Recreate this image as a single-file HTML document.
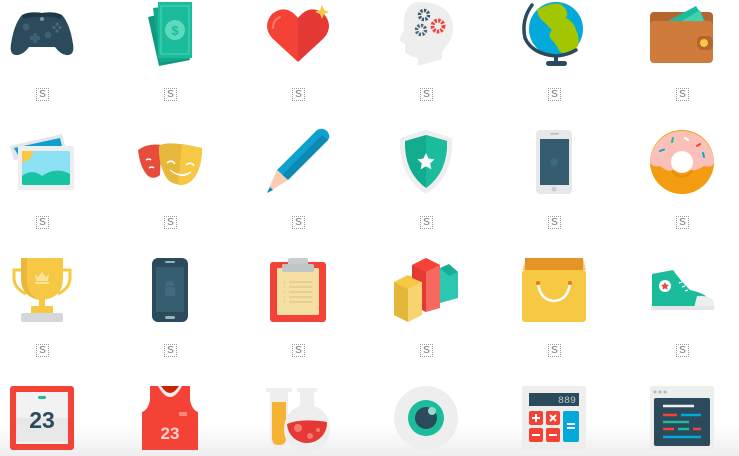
<!DOCTYPE html>
<html><head><meta charset="utf-8"><style>
html,body{margin:0;padding:0;background:#fff;width:739px;height:456px;overflow:hidden;position:relative}
.s{position:absolute;width:11px;height:11px;border:1px dotted #999;font:10px/11px "Liberation Sans",sans-serif;color:#777;text-align:center}
svg{position:absolute;left:0;top:0}
</style></head><body>
<svg width="739" height="456" viewBox="0 0 739 456" font-family="Liberation Sans, sans-serif">
<defs><linearGradient id="bg" x1="0" y1="0" x2="0" y2="1"><stop offset="0" stop-color="#fff"/><stop offset="1" stop-color="#eeeeee"/></linearGradient></defs>
<rect x="0" y="425" width="739" height="31" fill="url(#bg)"/>
<!-- gamepad -->
<path d="M22 15 Q30 11 42 13 Q54 11 62 15 Q70 24 73 44 Q75 56 66 55 Q60 54 55 47 L29 47 Q24 54 18 55 Q9 56 11 44 Q14 24 22 15Z" fill="#2b4a5c"/>
<path d="M22 15 Q30 11 42 13 Q54 11 62 15 L60 19 Q50 16 42 17 Q34 16 24 19Z" fill="#1f3848"/>
<circle cx="42" cy="19" r="2" fill="#7f96a3"/><circle cx="26" cy="27" r="3.5" fill="#3f6072"/><circle cx="48" cy="35" r="3.5" fill="#3f6072"/>
<path d="M33 33h4v3h3v4h-3v3h-4v-3h-3v-4h3z" fill="#3f6072"/>
<circle cx="57" cy="24" r="1.6" fill="#46697b"/><circle cx="57" cy="31" r="1.6" fill="#46697b"/><circle cx="54" cy="27.5" r="1.6" fill="#46697b"/><circle cx="60" cy="27.5" r="1.6" fill="#46697b"/>
<!-- money -->
<path d="M148 17 L178 10 L190 60 L159 66Z" fill="#0f9a7e"/>
<path d="M153 8 L184 4 L191 58 L160 63Z" fill="#13a88a"/>
<rect x="158" y="2" width="34" height="56" fill="#1abc9c"/>
<rect x="161" y="6" width="28" height="48" fill="none" stroke="#5ed9be" stroke-width="0.8"/>
<circle cx="175" cy="30" r="10" fill="#5ed9be"/><text x="175" y="35" font-size="13" fill="#1abc9c" text-anchor="middle" font-weight="bold">$</text>
<!-- heart -->
<path d="M298 62 L272 38 Q262 26 272 14 Q286 3 298 18Z" fill="#f44336"/>
<path d="M298 62 L324 38 Q334 26 324 14 Q310 3 298 18Z" fill="#e53935"/>
<path d="M273 28 Q273 20 280 17" stroke="#f77a70" stroke-width="2" fill="none" stroke-linecap="round"/>
<path d="M322 5 L324 10 L329 12 L324 14 L322 19 L320 14 L315 12 L320 10Z" fill="#f6c843"/>
<!-- head -->
<path d="M418 2 Q452 2 453 28 Q453 38 447 45 L442 52 L442 59 L418 66 L418 58 Q408 56 405 52 L405 44 L399 40 L404 30 Q402 4 418 2Z" fill="#eeeeee"/>
<circle cx="424" cy="15" r="4.5" fill="none" stroke="#3e5a6b" stroke-width="3.5" stroke-dasharray="2.2 1.3"/>
<circle cx="421" cy="30" r="4.5" fill="none" stroke="#4d6a7b" stroke-width="3.5" stroke-dasharray="2.2 1.3"/>
<circle cx="438" cy="26" r="5.5" fill="none" stroke="#f44336" stroke-width="4" stroke-dasharray="2.4 1.3"/>
<!-- globe -->
<circle cx="556" cy="29" r="27" fill="#03a9d9"/>
<path d="M537 10 Q550 2 560 4 Q570 10 566 18 Q574 22 576 30 Q580 38 578 46 Q570 56 560 52 Q556 44 552 40 Q547 36 552 30 Q548 26 544 22 Q538 18 537 10Z" fill="#a2c700"/>
<path d="M532 5 Q521 20 525 38 Q532 54 556 56 Q568 55 576 50" fill="none" stroke="#2b4a5c" stroke-width="3.5" stroke-linecap="round"/>
<rect x="554" y="55" width="4" height="8" fill="#2b4a5c"/><rect x="546" y="61" width="21" height="5" rx="2.5" fill="#2b4a5c"/>
<!-- wallet -->
<rect x="650" y="12" width="63" height="50" rx="4" fill="#b5652e"/>
<path d="M666 22 L696 6 L706 22Z" fill="#1abc9c"/><path d="M680 22 L700 10 L704 22Z" fill="#3fd1b1"/>
<rect x="650" y="21" width="63" height="42" rx="4" fill="#cf7b3c"/>
<rect x="697" y="36" width="16" height="14" rx="5" fill="#b5652e"/><circle cx="704" cy="43" r="4" fill="#f6c843"/>
<!-- photos -->
<path d="M10 146 L62 134 L66 150 L14 160Z" fill="#e3e6e8"/><path d="M14 148 L60 138 L62 146 L18 155Z" fill="#0ea0cf"/>
<rect x="18" y="146" width="56" height="44" rx="2" fill="#eeeeee"/>
<rect x="22" y="151" width="48" height="34" rx="2" fill="#8de1f5"/>
<path d="M22 151 h11 a11 11 0 0 1 -11 11Z" fill="#f6c843"/>
<path d="M22 176 Q32 168 42 176 Q56 166 70 174 L70 183 Q70 185 68 185 L24 185 Q22 185 22 183Z" fill="#1bc3a5"/>
<!-- masks -->
<path d="M138 150 Q148 143 161 145 L160 175 Q154 180 148 176 Q140 168 138 150Z" fill="#e74c3c"/>
<path d="M146 160 q3 -2 5 0 M149 168 q3 -2 5 0" stroke="#fff" stroke-width="1.4" fill="none"/>
<path d="M159 146 Q166 140 202 148 Q202 172 190 182 Q178 188 168 180 Q158 166 159 146Z" fill="#e6b93c"/>
<path d="M182 144 L202 148 Q202 172 190 182 Q184 186 178 185Z" fill="#f6c843"/>
<path d="M167 163 q5 -4 8 1 M186 165 q5 -4 8 1" stroke="#fff" stroke-width="1.6" fill="none"/>
<path d="M170 170 Q180 178 191 172 Q182 180 170 170Z" fill="#fff" stroke="#fff" stroke-width="1"/>
<!-- pencil -->
<path d="M277 170 L317 130 Q322 127 327 131 Q331 136 328 140 L288 180Z" fill="#0ea0cf"/>
<path d="M282 175 L322 135 L328 140 L288 180Z" fill="#0a8ab3"/>
<path d="M277 170 L288 180 L267 193Z" fill="#f9cdb4"/><path d="M267 193 L270 187 L273 190Z" fill="#0a8ab3"/>
<!-- shield -->
<path d="M426 130 L452 138 Q454 176 426 194 Q398 176 400 138Z" fill="#eeeeee"/>
<path d="M426 135 L447 141 Q448 172 426 188 Q404 172 405 141Z" fill="#12ab8e"/>
<path d="M426 135 L447 141 Q448 172 426 188Z" fill="#1abc9c"/>
<path d="M426 153 l2.6 5.5 6 .7 -4.4 4.2 1.2 6 -5.4 -3 -5.4 3 1.2 -6 -4.4 -4.2 6 -.7z" fill="#fafafa"/>
<!-- iphone -->
<rect x="536" y="130" width="36" height="64" rx="4" fill="#e6e8e9"/>
<rect x="540" y="139" width="29" height="46" fill="#345c6e"/>
<rect x="550" y="133" width="9" height="1.5" rx="1" fill="#b5bbbe"/><circle cx="554" cy="189" r="2.5" fill="#c9cecf"/>
<circle cx="554" cy="162" r="4" fill="#3e687b"/>
<!-- donut -->
<circle cx="682" cy="162" r="32" fill="#f39c12"/>
<path d="M650 163 A32 32 0 0 1 714 163 Q712 168 704 166 Q696 172 686 170 L676 170 Q668 173 660 166 Q654 168 650 163Z" fill="#fbc0b8"/>
<circle cx="682" cy="162" r="11" fill="#fff"/>
<path d="M672 170 A11 11 0 0 0 692 170" stroke="#e58e0c" stroke-width="2" fill="none"/>
<g stroke-width="2" stroke-linecap="round"><path d="M660 151 l4 -1.5" stroke="#03a9d9"/><path d="M672 142 l1 -4" stroke="#1abc9c"/><path d="M685 138 l3 2" stroke="#fff"/><path d="M697 146 l3 -2" stroke="#f44336"/><path d="M703 153 l1 4" stroke="#03a9d9"/></g>
<!-- trophy -->
<path d="M22 270 h-8 v8 q0 10 12 16 M62 270 h8 v8 q0 10 -12 16" stroke="#f6c843" stroke-width="3" fill="none"/>
<path d="M21 258 h42 v20 q0 20 -21 22 q-21 -2 -21 -22Z" fill="#f6c843"/>
<path d="M21 258 h6 v22 q0 14 12 20 q-18 -4 -18 -22Z" fill="#eab73a"/>
<rect x="39" y="298" width="6" height="10" fill="#f6c843"/><rect x="31" y="306" width="22" height="8" rx="1" fill="#f6c843"/>
<rect x="21" y="313" width="42" height="9" rx="2" fill="#d4d8da"/>
<path d="M35 274 l3 3 4 -5 4 5 3 -3 -1 7 h-12Z" fill="#fbe29a"/><rect x="35" y="282" width="14" height="2" fill="#fbe29a"/>
<!-- android phone -->
<rect x="152" y="258" width="36" height="64" rx="6" fill="#2b4a5c"/>
<rect x="156" y="267" width="28" height="45" fill="#355f71"/>
<rect x="165" y="261" width="10" height="2" rx="1" fill="#9eb0b9"/><rect x="165" y="316" width="10" height="3" rx="1.5" fill="#9eb0b9"/>
<rect x="165" y="287" width="10" height="9" rx="1" fill="#3e6b7e"/><path d="M165 286 a5 5 0 0 1 10 0Z" fill="#3e6b7e"/>
<!-- clipboard -->
<rect x="270" y="262" width="56" height="60" rx="3" fill="#f44336"/>
<rect x="277" y="268" width="42" height="47" rx="1" fill="#f5dfa3"/>
<rect x="288" y="258" width="20" height="8" rx="2" fill="#c9cdd0"/><rect x="282" y="264" width="32" height="8" rx="2" fill="#c0c5c8"/>
<g stroke="#dfc486" stroke-width="1.2"><path d="M289 282h23M289 287h23M289 292h23M289 297h23M289 302h23"/><path d="M284 282h1M284 287h1M284 292h1M284 297h1M284 302h1"/></g>
<!-- bar chart -->
<path d="M394 282 L408 275 L422 282 L422 315 L408 322 L394 315Z" fill="#f6d570"/><path d="M394 282 L408 289 L408 322 L394 315Z" fill="#e2b73a"/><path d="M394 282 L408 275 L422 282 L408 289Z" fill="#f6c843"/>
<path d="M412 265 L426 258 L440 265 L440 308 L426 312 L422 310 L422 282 L412 278Z" fill="#f7695e"/><path d="M412 265 L426 272 L426 312 L422 310 L422 282 L412 278Z" fill="#e53935"/><path d="M412 265 L426 258 L440 265 L426 272Z" fill="#f44336"/>
<path d="M440 268 L449 268 L458 272 L458 298 L440 303Z" fill="#2bc7b0"/><path d="M440 268 L449 264 L458 272 L449 276Z" fill="#1aae96"/>
<!-- bag -->
<rect x="525" y="258" width="58" height="14" fill="#e07a20"/>
<path d="M522 270 L527 258 L583 258 L586 270Z" fill="#e6a62c" opacity=".6"/>
<rect x="522" y="270" width="64" height="52" rx="3" fill="#f6c843"/>
<path d="M538 283 Q540 300 554 301 Q568 300 570 283" stroke="#fff" stroke-width="2.5" fill="none"/>
<circle cx="538" cy="283" r="2" fill="#e07a20"/><circle cx="570" cy="283" r="2" fill="#e07a20"/>
<!-- sneaker -->
<path d="M652 274 L673 270 Q680 280 690 290 Q700 292 706 296 L708 308 L652 308Z" fill="#1abc9c"/>
<path d="M697 296 Q710 295 714 302 L714 308 L694 308Z" fill="#eceeef"/>
<rect x="651" y="306" width="63" height="4" fill="#e3e6e8"/>
<circle cx="665" cy="286" r="6" fill="#fff"/><path d="M665 282 l1.2 2.6 2.8 .3 -2 2 .6 2.8 -2.6 -1.4 -2.6 1.4 .6 -2.8 -2 -2 2.8 -.3z" fill="#e74c3c"/>
<path d="M679 283 l3 -1 M682 287 l3 -1 M685 291 l3 -1" stroke="#fff" stroke-width="1.2"/>
<!-- calendar -->
<rect x="10" y="386" width="64" height="64" rx="3" fill="#f44336"/>
<rect x="16" y="392" width="52" height="52" fill="#f2f2f2"/><rect x="16" y="418" width="52" height="24" fill="#e8e8e8"/>
<rect x="38" y="396" width="8" height="3" rx="1.5" fill="#1abc9c"/>
<text x="42" y="428" font-size="23" font-weight="bold" fill="#2b4a5c" text-anchor="middle">23</text>
<!-- jersey -->
<path d="M150 386 L160 386 Q170 404 180 386 L190 386 L190 400 Q192 410 198 412 L198 450 L142 450 L142 412 Q148 410 150 400Z" fill="#f44336"/>
<path d="M158 386 Q170 408 182 386 L179 386 Q170 400 161 386Z" fill="#eee"/>
<path d="M161 386 Q170 400 179 386Z" fill="#cc2200"/>
<rect x="179" y="412" width="8" height="4" fill="#f7897f"/>
<text x="170" y="439" font-size="17" font-weight="bold" fill="#fbd2cc" text-anchor="middle">23</text>
<!-- flasks -->
<rect x="266" y="388" width="26" height="4" rx="1" fill="#eeeeee"/>
<path d="M270 392 h18 v46 q0 10 -9 10 q-9 0 -9 -10Z" fill="#eeeeee"/>
<path d="M272 402 h14 v36 q0 7 -7 7 q-7 0 -7 -7Z" fill="#f6b333"/>
<rect x="297" y="388" width="20" height="4" rx="1" fill="#eeeeee"/>
<path d="M300 392 h14 v14 q16 6 16 24 a23 23 0 0 1 -46 0 q0 -18 16 -24Z" fill="#eeeeee"/>
<path d="M287 424 q14 -6 40 -2 a20 20 0 0 1 -40 2Z" fill="#e53935"/>
<circle cx="298" cy="428" r="4" fill="#f47a70"/><circle cx="310" cy="436" r="3" fill="#f47a70"/><circle cx="318" cy="430" r="2" fill="#f47a70"/>
<!-- eye -->
<circle cx="426" cy="418" r="32" fill="#eeeeee"/>
<circle cx="426" cy="418" r="18" fill="#1abc9c"/><circle cx="426" cy="418" r="11" fill="#2b4a5c"/>
<circle cx="432" cy="411" r="4" fill="#9ad7cc"/>
<!-- calculator -->
<rect x="522" y="386" width="64" height="64" rx="2" fill="#eeeeee"/>
<rect x="529" y="393" width="50" height="13" fill="#2b4a5c"/>
<text x="576" y="403" font-size="10" fill="#b9c6cd" text-anchor="end" font-family="Liberation Mono, monospace">889</text>
<rect x="529" y="411" width="14" height="14" rx="2" fill="#f44336"/><rect x="546" y="411" width="14" height="14" rx="2" fill="#f44336"/>
<rect x="529" y="428" width="14" height="14" rx="2" fill="#f44336"/><rect x="546" y="428" width="14" height="14" rx="2" fill="#f44336"/>
<rect x="563" y="411" width="16" height="31" rx="2" fill="#03a9d9"/>
<g stroke="#fff" stroke-width="2"><path d="M532 418h8M536 414v8M550 415l6 6M556 415l-6 6M532 435h8M549 435h8M567 424h8M567 428h8"/></g>
<!-- code window -->
<rect x="650" y="386" width="64" height="64" rx="2" fill="#eeeeee"/>
<circle cx="655" cy="392" r="1.6" fill="#bbb"/><circle cx="660" cy="392" r="1.6" fill="#bbb"/><circle cx="665" cy="392" r="1.6" fill="#bbb"/>
<rect x="654" y="398" width="56" height="48" rx="2" fill="#2b4a5c"/>
<g stroke-width="2.5"><path d="M663 406h31" stroke="#eee"/><path d="M663 415h14" stroke="#f44336"/><path d="M681 415h20" stroke="#03a9d9"/><path d="M663 422h26" stroke="#1abc9c"/><path d="M663 429h11" stroke="#f44336"/><path d="M678 429h11" stroke="#1abc9c"/><path d="M693 429h8" stroke="#f44336"/><path d="M663 437h38" stroke="#03a9d9"/></g>
</svg>
<div class="s" style="left:36px;top:88px">S</div><div class="s" style="left:164px;top:88px">S</div><div class="s" style="left:292px;top:88px">S</div><div class="s" style="left:420px;top:88px">S</div><div class="s" style="left:548px;top:88px">S</div><div class="s" style="left:676px;top:88px">S</div>
<div class="s" style="left:36px;top:216px">S</div><div class="s" style="left:164px;top:216px">S</div><div class="s" style="left:292px;top:216px">S</div><div class="s" style="left:420px;top:216px">S</div><div class="s" style="left:548px;top:216px">S</div><div class="s" style="left:676px;top:216px">S</div>
<div class="s" style="left:36px;top:344px">S</div><div class="s" style="left:164px;top:344px">S</div><div class="s" style="left:292px;top:344px">S</div><div class="s" style="left:420px;top:344px">S</div><div class="s" style="left:548px;top:344px">S</div><div class="s" style="left:676px;top:344px">S</div>
</body></html>
